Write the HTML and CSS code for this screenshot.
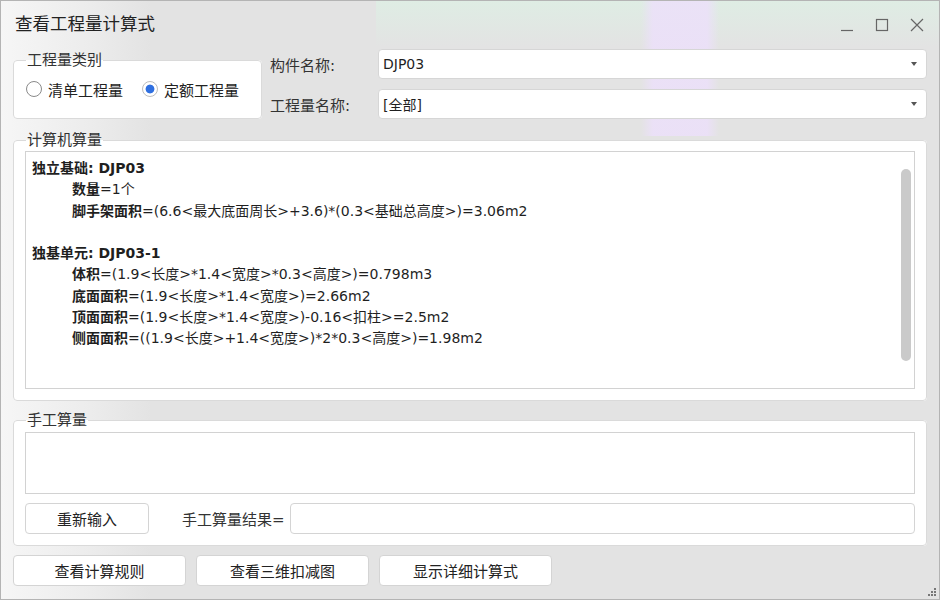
FILE: index.html
```html
<!DOCTYPE html>
<html>
<head>
  <meta charset="utf-8">
  <title>查看工程量计算式</title>
  <link rel="stylesheet" href="styles.css">
</head>
<body>
  <div class="window">
    <div class="titlebar">
      <span class="title">查看工程量计算式</span>
      <div class="controls">
        <svg width="14" height="14" viewBox="0 0 14 14"><path d="M1 12.5h12" stroke="#666" stroke-width="1.2"/></svg>
        <svg width="14" height="14" viewBox="0 0 14 14"><rect x="1.5" y="1.5" width="11" height="11" fill="none" stroke="#666" stroke-width="1.2"/></svg>
        <svg width="14" height="14" viewBox="0 0 14 14"><path d="M1 1l12 12M13 1L1 13" stroke="#666" stroke-width="1.2"/></svg>
      </div>
    </div>

    <div class="content">
      <div class="top">
        <fieldset class="group type-group">
          <legend>工程量类别</legend>
          <div class="radios">
            <label class="radio"><span class="dot"></span>清单工程量</label>
            <label class="radio checked"><span class="dot"></span>定额工程量</label>
          </div>
        </fieldset>
        <div class="fields">
          <div class="field">
            <span class="field-label">构件名称:</span>
            <div class="combo"><span>DJP03</span><i class="caret"></i></div>
          </div>
          <div class="field">
            <span class="field-label">工程量名称:</span>
            <div class="combo"><span>[全部]</span><i class="caret"></i></div>
          </div>
        </div>
      </div>

      <fieldset class="group calc-group">
        <legend>计算机算量</legend>
        <div class="textbox">
          <div class="lines">
            <div class="head"><b>独立基础: DJP03</b></div>
            <div class="item"><b>数量</b>=1个</div>
            <div class="item"><b>脚手架面积</b>=(6.6&lt;最大底面周长&gt;+3.6)*(0.3&lt;基础总高度&gt;)=3.06m2</div>
            <div class="blank"></div>
            <div class="head"><b>独基单元: DJP03-1</b></div>
            <div class="item"><b>体积</b>=(1.9&lt;长度&gt;*1.4&lt;宽度&gt;*0.3&lt;高度&gt;)=0.798m3</div>
            <div class="item"><b>底面面积</b>=(1.9&lt;长度&gt;*1.4&lt;宽度&gt;)=2.66m2</div>
            <div class="item"><b>顶面面积</b>=(1.9&lt;长度&gt;*1.4&lt;宽度&gt;)-0.16&lt;扣柱&gt;=2.5m2</div>
            <div class="item"><b>侧面面积</b>=((1.9&lt;长度&gt;+1.4&lt;宽度&gt;)*2*0.3&lt;高度&gt;)=1.98m2</div>
          </div>
          <div class="scrolltrack"><div class="thumb"></div></div>
        </div>
      </fieldset>

      <fieldset class="group manual-group">
        <legend>手工算量</legend>
        <div class="manual-input"></div>
        <div class="manual-row">
          <button class="btn reinput">重新输入</button>
          <span class="result-label">手工算量结果=</span>
          <div class="result-input"></div>
        </div>
      </fieldset>

      <div class="actions">
        <button class="btn action">查看计算规则</button>
        <button class="btn action">查看三维扣减图</button>
        <button class="btn action">显示详细计算式</button>
      </div>
    </div>

    <svg class="grip" width="10" height="10" viewBox="0 0 10 10">
      <rect x="7" y="1" width="2" height="2" fill="#777"/>
      <rect x="4" y="4" width="2" height="2" fill="#777"/>
      <rect x="7" y="4" width="2" height="2" fill="#777"/>
      <rect x="1" y="7" width="2" height="2" fill="#777"/>
      <rect x="4" y="7" width="2" height="2" fill="#777"/>
      <rect x="7" y="7" width="2" height="2" fill="#777"/>
    </svg>
  </div>
</body>
</html>
```

FILE: styles.css
```css
* {
  box-sizing: border-box;
}

body {
  margin: 0;
  font-family: "DejaVu Sans", "Noto Sans CJK SC", sans-serif;
  font-size: 14px;
  color: #1f1f1f;
}

.window {
  position: relative;
  width: 940px;
  height: 600px;
  border: 1px solid #b4b4b4;
  background:
    linear-gradient(to right, rgba(236,224,250,0) 640px, rgba(236,224,250,.85) 652px, rgba(236,224,250,.85) 706px, rgba(236,224,250,0) 718px) top left / 100% 135px no-repeat,
    linear-gradient(to bottom, rgba(222,238,228,.9), rgba(226,232,228,0) 46px) top right / 60% 60px no-repeat,
    linear-gradient(to right, #f6f6f6 0, #ececec 90px, #e3e3e3 150px, #e3e3e3 100%);
}

.titlebar {
  height: 48px;
  display: flex;
  justify-content: space-between;
  align-items: flex-start;
}

.title {
  padding: 12px 0 0 14px;
  font-size: 17.5px;
  line-height: 22px;
  color: #222;
}

.controls {
  display: flex;
  gap: 21px;
  padding: 17px 15px 0 0;
}

.content {
  padding: 0 12px;
}

.top {
  display: flex;
  gap: 8px;
}

.group {
  margin: 0;
  min-width: 0;
  background: #fff;
  border: 1px solid #dadada;
  border-radius: 4px;
}

.group legend {
  padding: 0 1px;
  margin-left: 0;
  font-size: 15px;
  line-height: 18px;
  color: #333;
}

.type-group {
  width: 249px;
  margin-top: 2px;
  padding: 7px 12px 16px 12px;
}

.radios {
  display: flex;
  gap: 19px;
  height: 26px;
  align-items: center;
}

.radio {
  display: flex;
  align-items: center;
  gap: 6px;
  font-size: 15px;
  color: #222;
}

.dot {
  width: 16px;
  height: 16px;
  border: 1px solid #8a8a8a;
  border-radius: 50%;
  background: #fff;
  display: inline-block;
}

.radio.checked .dot {
  border-color: #bdbdbd;
  background: radial-gradient(circle, #2f6fe0 0, #2f6fe0 4px, #fff 4.8px);
}

.fields {
  flex: 1;
  display: flex;
  flex-direction: column;
  gap: 10px;
}

.field {
  display: flex;
  align-items: center;
  height: 30px;
}

.field-label {
  width: 108px;
  font-size: 15px;
  color: #333;
}

.combo {
  flex: 1;
  height: 30px;
  background: #fff;
  border: 1px solid #d6d6d6;
  border-radius: 4px;
  display: flex;
  align-items: center;
  justify-content: space-between;
  padding: 0 9px 0 4px;
  font-size: 14px;
}

.caret {
  width: 0;
  height: 0;
  border-left: 3px solid transparent;
  border-right: 3px solid transparent;
  border-top: 4px solid #555;
}

.calc-group {
  margin-top: 12px;
  padding: 2px 11px 11px 11px;
}

.calc-group legend,
.manual-group legend {
  margin-left: 1px;
}

.textbox {
  height: 238px;
  border: 1px solid #d2d2d2;
  display: flex;
}

.lines {
  flex: 1;
  padding: 6px 6px;
  line-height: 21.3px;
  font-size: 14px;
}

.lines b {
  font-weight: bold;
}

.item {
  padding-left: 40px;
}

.blank {
  height: 21.3px;
}

.scrolltrack {
  width: 13px;
  padding: 17px 3px 0 0;
}

.thumb {
  width: 10px;
  height: 192px;
  border-radius: 5px;
  background: #cacaca;
}

.manual-group {
  margin-top: 10px;
  padding: 3px 11px 11px 11px;
}

.manual-input {
  height: 62px;
  border: 1px solid #d2d2d2;
}

.manual-row {
  display: flex;
  align-items: center;
  margin-top: 9px;
  height: 31px;
}

.btn {
  font-family: inherit;
  font-size: 15px;
  color: #222;
  background: #fff;
  border: 1px solid #d4d4d4;
  border-radius: 4px;
  padding: 0;
}

.reinput {
  width: 124px;
  height: 31px;
}

.result-label {
  margin-left: 33px;
  width: 108px;
  font-size: 15px;
  color: #333;
}

.result-input {
  flex: 1;
  height: 31px;
  border: 1px solid #d4d4d4;
  border-radius: 4px;
  background: #fff;
}

.actions {
  display: flex;
  gap: 10px;
  margin-top: 9px;
}

.action {
  width: 173px;
  height: 31px;
}

.grip {
  position: absolute;
  right: 2px;
  bottom: 2px;
}
```
